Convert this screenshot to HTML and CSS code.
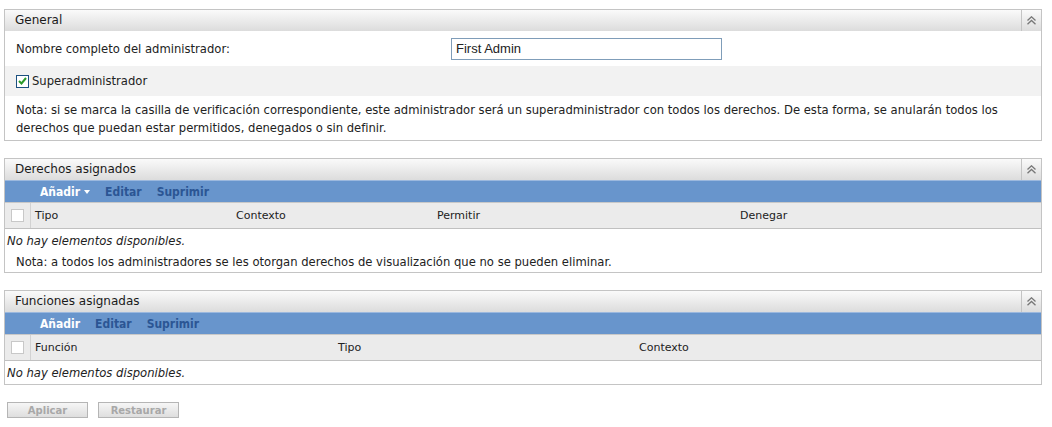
FILE: index.html
```html
<!DOCTYPE html>
<html lang="es">
<head>
  <meta charset="UTF-8" />
  <title>Administrador</title>
  <link rel="stylesheet" href="styles.css">
</head>
<body>
  <div class="page">
    <section class="panel">
      <div class="panel-head">
        <span class="panel-title">General</span>
        <span class="collapse">
          <svg width="11" height="9" viewBox="0 0 11 9"><path d="M1.5 4.5 L5.5 0.8 L9.5 4.5 M1.5 8.2 L5.5 4.5 L9.5 8.2" fill="none" stroke="#777" stroke-width="1.3"/></svg>
        </span>
      </div>
      <div class="form-row">
        <label class="form-label">Nombre completo del administrador:</label>
        <input class="text-input" type="text" value="First Admin">
      </div>
      <div class="form-row shaded">
        <label class="check-label">
          <span class="checkbox checked">
            <svg width="9" height="8" viewBox="0 0 9 8"><path d="M1 4 L3.5 6.5 L8 1" fill="none" stroke="#2a9a2a" stroke-width="2"/></svg>
          </span>
          Superadministrador
        </label>
      </div>
      <p class="note">Nota: si se marca la casilla de verificación correspondiente, este administrador será un superadministrador con todos los derechos. De esta forma, se anularán todos los derechos que puedan estar permitidos, denegados o sin definir.</p>
    </section>

    <section class="panel">
      <div class="panel-head">
        <span class="panel-title">Derechos asignados</span>
        <span class="collapse">
          <svg width="11" height="9" viewBox="0 0 11 9"><path d="M1.5 4.5 L5.5 0.8 L9.5 4.5 M1.5 8.2 L5.5 4.5 L9.5 8.2" fill="none" stroke="#777" stroke-width="1.3"/></svg>
        </span>
      </div>
      <div class="toolbar">
        <span class="tool active">Añadir <span class="caret"></span></span>
        <span class="tool">Editar</span>
        <span class="tool">Suprimir</span>
      </div>
      <div class="grid-head rights">
        <span class="cell check-cell"><span class="checkbox"></span></span>
        <span class="cell">Tipo</span>
        <span class="cell">Contexto</span>
        <span class="cell">Permitir</span>
        <span class="cell">Denegar</span>
      </div>
      <div class="empty">No hay elementos disponibles.</div>
      <p class="note small">Nota: a todos los administradores se les otorgan derechos de visualización que no se pueden eliminar.</p>
    </section>

    <section class="panel">
      <div class="panel-head">
        <span class="panel-title">Funciones asignadas</span>
        <span class="collapse">
          <svg width="11" height="9" viewBox="0 0 11 9"><path d="M1.5 4.5 L5.5 0.8 L9.5 4.5 M1.5 8.2 L5.5 4.5 L9.5 8.2" fill="none" stroke="#777" stroke-width="1.3"/></svg>
        </span>
      </div>
      <div class="toolbar">
        <span class="tool active">Añadir</span>
        <span class="tool">Editar</span>
        <span class="tool">Suprimir</span>
      </div>
      <div class="grid-head roles">
        <span class="cell check-cell"><span class="checkbox"></span></span>
        <span class="cell">Función</span>
        <span class="cell">Tipo</span>
        <span class="cell">Contexto</span>
      </div>
      <div class="empty">No hay elementos disponibles.</div>
    </section>

    <div class="actions">
      <button class="btn" disabled>Aplicar</button>
      <button class="btn" disabled>Restaurar</button>
    </div>
  </div>
</body>
</html>
```

FILE: styles.css
```css
* {
  margin: 0;
  padding: 0;
  box-sizing: border-box;
}

body {
  font-family: 'DejaVu Sans', Verdana, sans-serif;
  font-size: 11.6px;
  color: #222;
  background: #fff;
}

.page {
  padding: 9px 10px 0 4px;
}

.panel {
  border: 1px solid #c4c4c4;
  margin-bottom: 17px;
}

.panel-head {
  display: flex;
  align-items: stretch;
  height: 21px;
  background: linear-gradient(to bottom, #fafafa, #dcdcdc);
}

.panel-title {
  flex: 1;
  padding-left: 10px;
  font-size: 12px;
  line-height: 21px;
  color: #1a1a1a;
}

.collapse {
  width: 20px;
  border-left: 1px solid #c4c4c4;
  display: flex;
  align-items: center;
  justify-content: center;
}

.form-row {
  display: flex;
  align-items: center;
  padding-left: 11px;
  height: 35px;
}

.form-row.shaded {
  background: #f2f2f2;
  height: 30px;
}

.form-label {
  width: 435px;
}

.text-input {
  width: 271px;
  height: 22px;
  border: 1px solid #7f9db9;
  padding: 0 4px;
  font-family: 'Liberation Sans', Arial, sans-serif;
  font-size: 13px;
  color: #222;
}

.check-label {
  display: flex;
  align-items: center;
  gap: 3px;
}

.checkbox {
  display: inline-flex;
  align-items: center;
  justify-content: center;
  width: 13px;
  height: 13px;
  border: 1px solid #c8c8c8;
  background: #fff;
}

.checkbox.checked {
  border-color: #1c5180;
}

.note {
  padding: 5px 10px 3px 11px;
  line-height: 18px;
}

.note.small {
  padding: 1px 10px 1px 11px;
}

.toolbar {
  display: flex;
  gap: 15px;
  height: 22px;
  align-items: center;
  padding-left: 35px;
  background: #6895cc;
  border-top: 1px solid #9bb8de;
}

.tool {
  font-family: 'DejaVu Sans Condensed', 'DejaVu Sans', sans-serif;
  font-size: 12px;
  font-weight: bold;
  color: #2b5594;
}

.tool.active {
  color: #fff;
  display: flex;
  align-items: center;
  gap: 4px;
}

.caret {
  width: 0;
  height: 0;
  border-left: 3.5px solid transparent;
  border-right: 3.5px solid transparent;
  border-top: 4px solid #fff;
}

.grid-head {
  display: grid;
  height: 27px;
  font-size: 11px;
  background: #ebebeb;
  border-top: 1px solid #c8c8c8;
  border-bottom: 1px solid #c0c0c0;
}

.grid-head.rights {
  grid-template-columns: 26px 201px 201px 303px 1fr;
}

.grid-head.roles {
  grid-template-columns: 26px 303px 301px 1fr;
}

.cell {
  display: flex;
  align-items: center;
  padding-left: 4px;
}

.check-cell {
  justify-content: center;
  padding-left: 0;
  border-right: 1px solid #d2d2d2;
}

.empty {
  font-style: italic;
  padding-left: 2px;
  height: 23px;
  line-height: 24px;
}

.actions {
  display: flex;
  gap: 10px;
  padding-left: 3px;
}

.btn {
  width: 81px;
  height: 16px;
  border: 1px solid #b5b5b5;
  background: linear-gradient(to bottom, #f6f6f6, #dedede);
  font-family: 'DejaVu Sans', Verdana, sans-serif;
  font-size: 10px;
  font-weight: bold;
  color: #a8a8a8;
}
```
